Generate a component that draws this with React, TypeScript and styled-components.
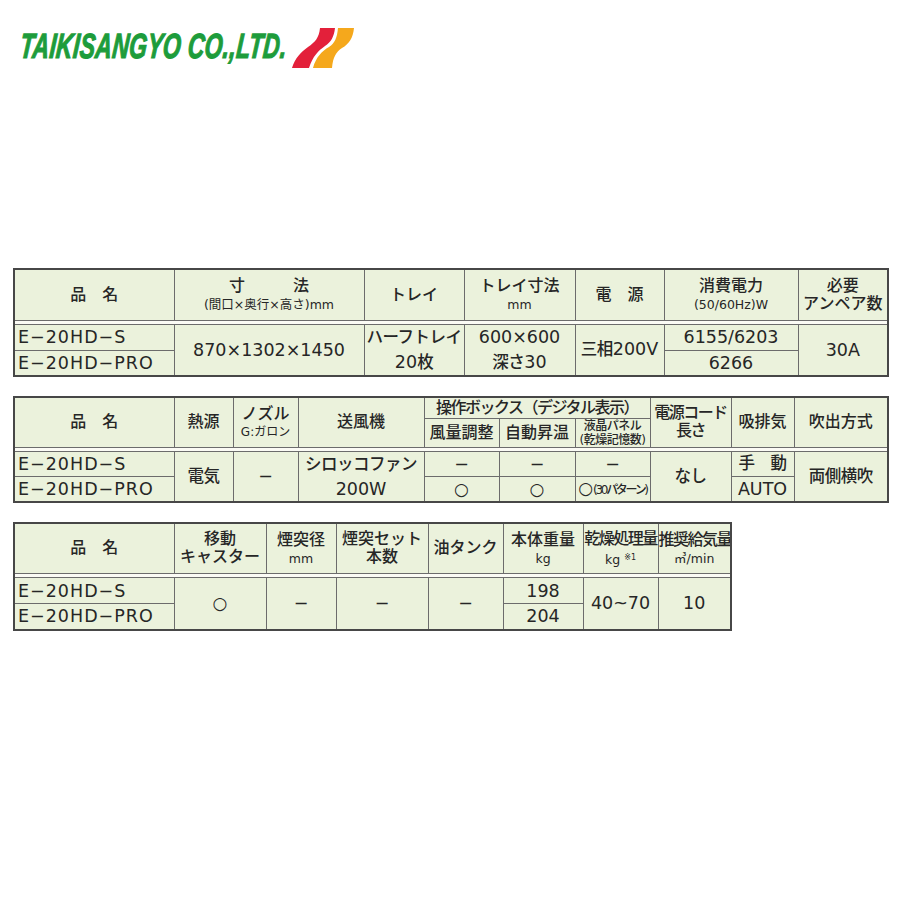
import React from 'react';
import styled, { createGlobalStyle } from 'styled-components';

const Global = createGlobalStyle`
  html, body { margin: 0; padding: 0; background: #ffffff; }
  body { font-family: "DejaVu Sans", "Noto Sans CJK JP", sans-serif; color: #2a2a2a; }
`;

const Page = styled.div`
  width: 900px;
  height: 900px;
  box-sizing: border-box;
  padding: 27px 0 0 13px;
  display: flex;
  flex-direction: column;
`;

const Logo = styled.div`
  display: flex;
  align-items: flex-start;
  margin-left: 9px;
  height: 42px;
`;

const LogoTextBox = styled.div`
  width: 268px;
  height: 42px;
  white-space: nowrap;
`;

const LogoText = styled.span`
  display: inline-block;
  margin-top: 0px;
  font-family: "Liberation Sans", Arial, sans-serif;
  font-weight: 700;
  font-style: italic;
  font-size: 35px;
  line-height: 38px;
  color: #1d9c3b;
  -webkit-text-stroke: 1.2px #1d9c3b;
  transform: scaleX(0.655) skewX(-8deg);
  transform-origin: left top;
  letter-spacing: 0.5px;
`;

const Tables = styled.div`
  display: flex;
  flex-direction: column;
  gap: 19px;
  margin-top: 199px;
`;

const Table = styled.table<{ $w: number }>`
  width: ${(p) => p.$w}px;
  border-collapse: collapse;
  table-layout: fixed;
  border: 2px solid #474747;
  background: #ebf2dc;
`;

const Col = styled.col<{ $w: number }>`
  width: ${(p) => p.$w}px;
`;

const Row = styled.tr<{ $h: number }>`
  height: ${(p) => p.$h}px;
`;

const Th = styled.th<{ $tight?: boolean }>`
  border: 1px solid #6c6c6c;
  padding: 0;
  font-weight: 500;
  font-size: 16px;
  line-height: 18px;
  letter-spacing: ${(p) => (p.$tight ? '-1.5px' : '0')};
  text-align: center;
  vertical-align: middle;
  color: #262626;
  white-space: nowrap;
  overflow: hidden;
`;

const Sub = styled.div<{ $size?: number }>`
  font-size: ${(p) => p.$size ?? 12.5}px;
  font-weight: 400;
  line-height: 15px;
  margin-top: 2px;
  letter-spacing: 0;
`;

const Small = styled.div`
  font-size: 12px;
  font-weight: 500;
  line-height: 14px;
  letter-spacing: -0.5px;
`;

const Sup = styled.sup`
  font-size: 8px;
  margin-left: 4px;
  vertical-align: 4px;
`;

const GapCell = styled.td`
  height: 3px;
  padding: 0;
  background: #fbfbf5;
  border-top: 1px solid #6c6c6c;
  border-bottom: 1px solid #6c6c6c;
`;

const Td = styled.td<{ $left?: boolean; $lh?: number }>`
  border: 1px solid #6c6c6c;
  padding: ${(p) => (p.$left ? '0 0 0 3px' : '0')};
  font-size: 17.5px;
  font-weight: 500;
  line-height: ${(p) => p.$lh ?? 20}px;
  text-align: ${(p) => (p.$left ? 'left' : 'center')};
  vertical-align: middle;
  color: #262626;
  white-space: nowrap;
  overflow: hidden;
`;

const Model = styled.span`
  letter-spacing: 1px;
`;

const Jp = styled.span`
  font-size: 16.5px;
  letter-spacing: -0.5px;
`;

const Circle = styled.span`
  font-family: "DejaVu Sans", sans-serif;
  font-weight: 400;
  font-size: 17px;
`;

const Tight = styled.span`
  font-size: 12px;
  letter-spacing: -2.3px;
  font-weight: 500;
`;

const Mark = () => (
  <svg width="64" height="42" viewBox="0 0 64 42">
    <path
      d="M30 1 L45 1 C44 10 41 15 35 19 C28 24 23 29 19 41 L2 41 C5 31 11 25 18 20 C25 15 29 11 30 1 Z"
      fill="#e3203a"
    />
    <path
      d="M48 1 L64 1 C63 11 59 17 52 21 C46 25 43 30 42 41 L23 41 C26 30 32 24 39 20 C45 16 47 11 48 1 Z"
      fill="#f5a81c"
    />
  </svg>
);

const MODEL_S = 'E−20HD−S';
const MODEL_P = 'E−20HD−PRO';

const Table1 = () => (
  <Table $w={874}>
    <colgroup>
      {[160, 190, 100, 111, 89, 134, 90].map((w, i) => (
        <Col key={i} $w={w} />
      ))}
    </colgroup>
    <tbody>
      <Row $h={51}>
        <Th>品　名</Th>
        <Th>
          寸　　　法
          <Sub>(間口×奥行×高さ)mm</Sub>
        </Th>
        <Th>トレイ</Th>
        <Th>
          トレイ寸法
          <Sub>mm</Sub>
        </Th>
        <Th>電　源</Th>
        <Th>
          消費電力
          <Sub>(50/60Hz)W</Sub>
        </Th>
        <Th>
          必要
          <br />
          アンペア数
        </Th>
      </Row>
      <tr>
        <GapCell colSpan={7} />
      </tr>
      <Row $h={26}>
        <Td $left>
          <Model>{MODEL_S}</Model>
        </Td>
        <Td rowSpan={2}>870×1302×1450</Td>
        <Td rowSpan={2} $lh={25}>
          <Jp>ハーフトレイ</Jp>
          <br />
          20<Jp>枚</Jp>
        </Td>
        <Td rowSpan={2} $lh={25}>
          600×600
          <br />
          <Jp>深さ</Jp>30
        </Td>
        <Td rowSpan={2}>
          <Jp>三相</Jp>200V
        </Td>
        <Td>6155/6203</Td>
        <Td rowSpan={2}>30A</Td>
      </Row>
      <Row $h={26}>
        <Td $left>
          <Model>{MODEL_P}</Model>
        </Td>
        <Td>6266</Td>
      </Row>
    </tbody>
  </Table>
);

const Table2 = () => (
  <Table $w={874}>
    <colgroup>
      {[160, 59, 65, 126, 75, 76, 75, 81, 63, 94].map((w, i) => (
        <Col key={i} $w={w} />
      ))}
    </colgroup>
    <tbody>
      <Row $h={21}>
        <Th rowSpan={2}>品　名</Th>
        <Th rowSpan={2}>熱源</Th>
        <Th rowSpan={2}>
          ノズル
          <Sub $size={12}>G:ガロン</Sub>
        </Th>
        <Th rowSpan={2}>送風機</Th>
        <Th colSpan={3} $tight>
          操作ボックス（デジタル表示）
        </Th>
        <Th rowSpan={2} $tight>
          電源コード
          <br />
          長さ
        </Th>
        <Th rowSpan={2}>吸排気</Th>
        <Th rowSpan={2}>吹出方式</Th>
      </Row>
      <Row $h={29}>
        <Th>風量調整</Th>
        <Th>自動昇温</Th>
        <Th>
          <Small>液晶パネル</Small>
          <Small>(乾燥記憶数)</Small>
        </Th>
      </Row>
      <tr>
        <GapCell colSpan={10} />
      </tr>
      <Row $h={24}>
        <Td $left>
          <Model>{MODEL_S}</Model>
        </Td>
        <Td rowSpan={2}>
          <Jp>電気</Jp>
        </Td>
        <Td rowSpan={2}>−</Td>
        <Td rowSpan={2} $lh={24}>
          <Jp>シロッコファン</Jp>
          <br />
          200W
        </Td>
        <Td>−</Td>
        <Td>−</Td>
        <Td>−</Td>
        <Td rowSpan={2}>
          <Jp>なし</Jp>
        </Td>
        <Td>
          <Jp>手　動</Jp>
        </Td>
        <Td rowSpan={2}>
          <Jp>両側横吹</Jp>
        </Td>
      </Row>
      <Row $h={24}>
        <Td $left>
          <Model>{MODEL_P}</Model>
        </Td>
        <Td>
          <Circle>○</Circle>
        </Td>
        <Td>
          <Circle>○</Circle>
        </Td>
        <Td>
          <Circle>○</Circle>
          <Tight>(30パターン)</Tight>
        </Td>
        <Td>AUTO</Td>
      </Row>
    </tbody>
  </Table>
);

const Table3 = () => (
  <Table $w={717}>
    <colgroup>
      {[160, 92, 70, 92, 75, 80, 75, 73].map((w, i) => (
        <Col key={i} $w={w} />
      ))}
    </colgroup>
    <tbody>
      <Row $h={51}>
        <Th>品　名</Th>
        <Th>
          移動
          <br />
          キャスター
        </Th>
        <Th>
          煙突径
          <Sub>mm</Sub>
        </Th>
        <Th>
          煙突セット
          <br />
          本数
        </Th>
        <Th>油タンク</Th>
        <Th>
          本体重量
          <Sub>kg</Sub>
        </Th>
        <Th $tight>
          乾燥処理量
          <Sub>
            kg<Sup>※1</Sup>
          </Sub>
        </Th>
        <Th $tight>
          推奨給気量
          <Sub>㎥/min</Sub>
        </Th>
      </Row>
      <tr>
        <GapCell colSpan={8} />
      </tr>
      <Row $h={26}>
        <Td $left>
          <Model>{MODEL_S}</Model>
        </Td>
        <Td rowSpan={2}>
          <Circle>○</Circle>
        </Td>
        <Td rowSpan={2}>−</Td>
        <Td rowSpan={2}>−</Td>
        <Td rowSpan={2}>−</Td>
        <Td>198</Td>
        <Td rowSpan={2}>40~70</Td>
        <Td rowSpan={2}>10</Td>
      </Row>
      <Row $h={26}>
        <Td $left>
          <Model>{MODEL_P}</Model>
        </Td>
        <Td>204</Td>
      </Row>
    </tbody>
  </Table>
);

export default function App() {
  return (
    <>
      <Global />
      <Page>
        <Logo>
          <LogoTextBox>
            <LogoText>TAIKISANGYO CO.,LTD.</LogoText>
          </LogoTextBox>
          <Mark />
        </Logo>
        <Tables>
          <Table1 />
          <Table2 />
          <Table3 />
        </Tables>
      </Page>
    </>
  );
}
